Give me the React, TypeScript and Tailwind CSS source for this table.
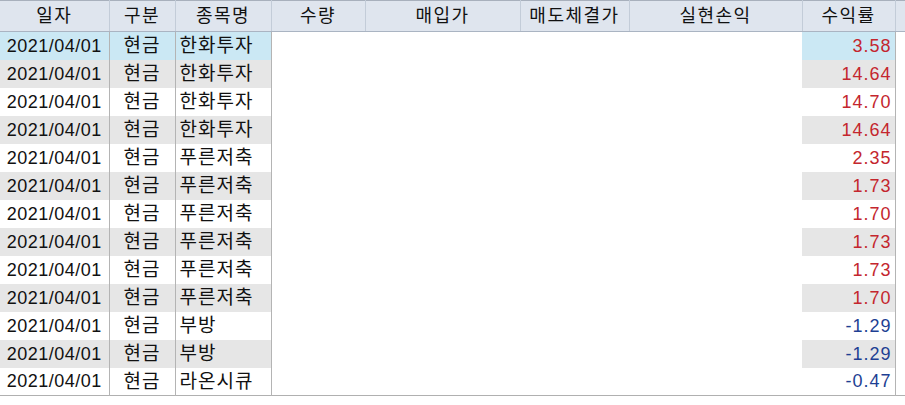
const headers = ['일자', '구분', '종목명', '수량', '매입가', '매도체결가', '실현손익', '수익률'];
const widths = ['w-[109px]', 'w-[66px]', 'w-[96px]', 'w-[94px]', 'w-[155px]', 'w-[109px]', 'w-[173px]', 'w-[93px]'];

const rows: [string, string][] = [
  ['한화투자', '3.58'],
  ['한화투자', '14.64'],
  ['한화투자', '14.70'],
  ['한화투자', '14.64'],
  ['푸른저축', '2.35'],
  ['푸른저축', '1.73'],
  ['푸른저축', '1.70'],
  ['푸른저축', '1.73'],
  ['푸른저축', '1.73'],
  ['푸른저축', '1.70'],
  ['부방', '-1.29'],
  ['부방', '-1.29'],
  ['라온시큐', '-0.47'],
];

export default function App() {
  return (
    <div
      className="w-[905px] h-[405px] bg-white overflow-hidden text-[18px] text-[#111]"
      style={{ fontFamily: '"Liberation Sans", "Noto Sans CJK KR", sans-serif' }}
    >
      <table className="table-fixed border-collapse">
        <thead>
          <tr className="h-[31px] bg-[#dfe5ee]">
            {headers.map((h, i) => (
              <th
                key={h}
                className={`${widths[i]} p-0 font-normal text-center leading-none tracking-[1.5px] border-t border-b border-r border-t-[#a8b0bc] border-b-[#aab4c2] border-r-[#c3ccd8]`}
              >
                {h}
              </th>
            ))}
            <th className="w-[10px] p-0 border-t border-b border-t-[#a8b0bc] border-b-[#aab4c2]" />
          </tr>
        </thead>
        <tbody>
          {rows.map(([name, rate], i) => {
            const bg = i === 0 ? 'bg-[#cbe8f4]' : i % 2 === 1 ? 'bg-[#e6e6e6]' : 'bg-white';
            const color = rate.startsWith('-') ? 'text-[#1e3f93]' : 'text-[#c4262e]';
            return (
              <tr key={i} className="h-[28px]">
                <td className={`${bg} p-0 text-center leading-none border-r border-[#b4b4b4] tracking-[0.5px]`}>2021/04/01</td>
                <td className={`${bg} p-0 text-center text-[19px] leading-none border-r border-[#b4b4b4] tracking-[1px]`}>현금</td>
                <td className={`${bg} p-0 pl-[4px] text-left text-[19px] leading-none border-r border-[#b4b4b4] tracking-[1px]`}>{name}</td>
                <td className="p-0" />
                <td className="p-0" />
                <td className="p-0" />
                <td className="p-0" />
                <td className={`${bg} ${color} p-0 pr-[3px] text-right leading-none border-r border-[#b4b4b4] tracking-[1px]`}>
                  {rate}
                </td>
                <td className="p-0" />
              </tr>
            );
          })}
          <tr className="h-[10px]">
            <td colSpan={9} className="p-0 border-t border-[#b0b0b0]" />
          </tr>
        </tbody>
      </table>
    </div>
  );
}
